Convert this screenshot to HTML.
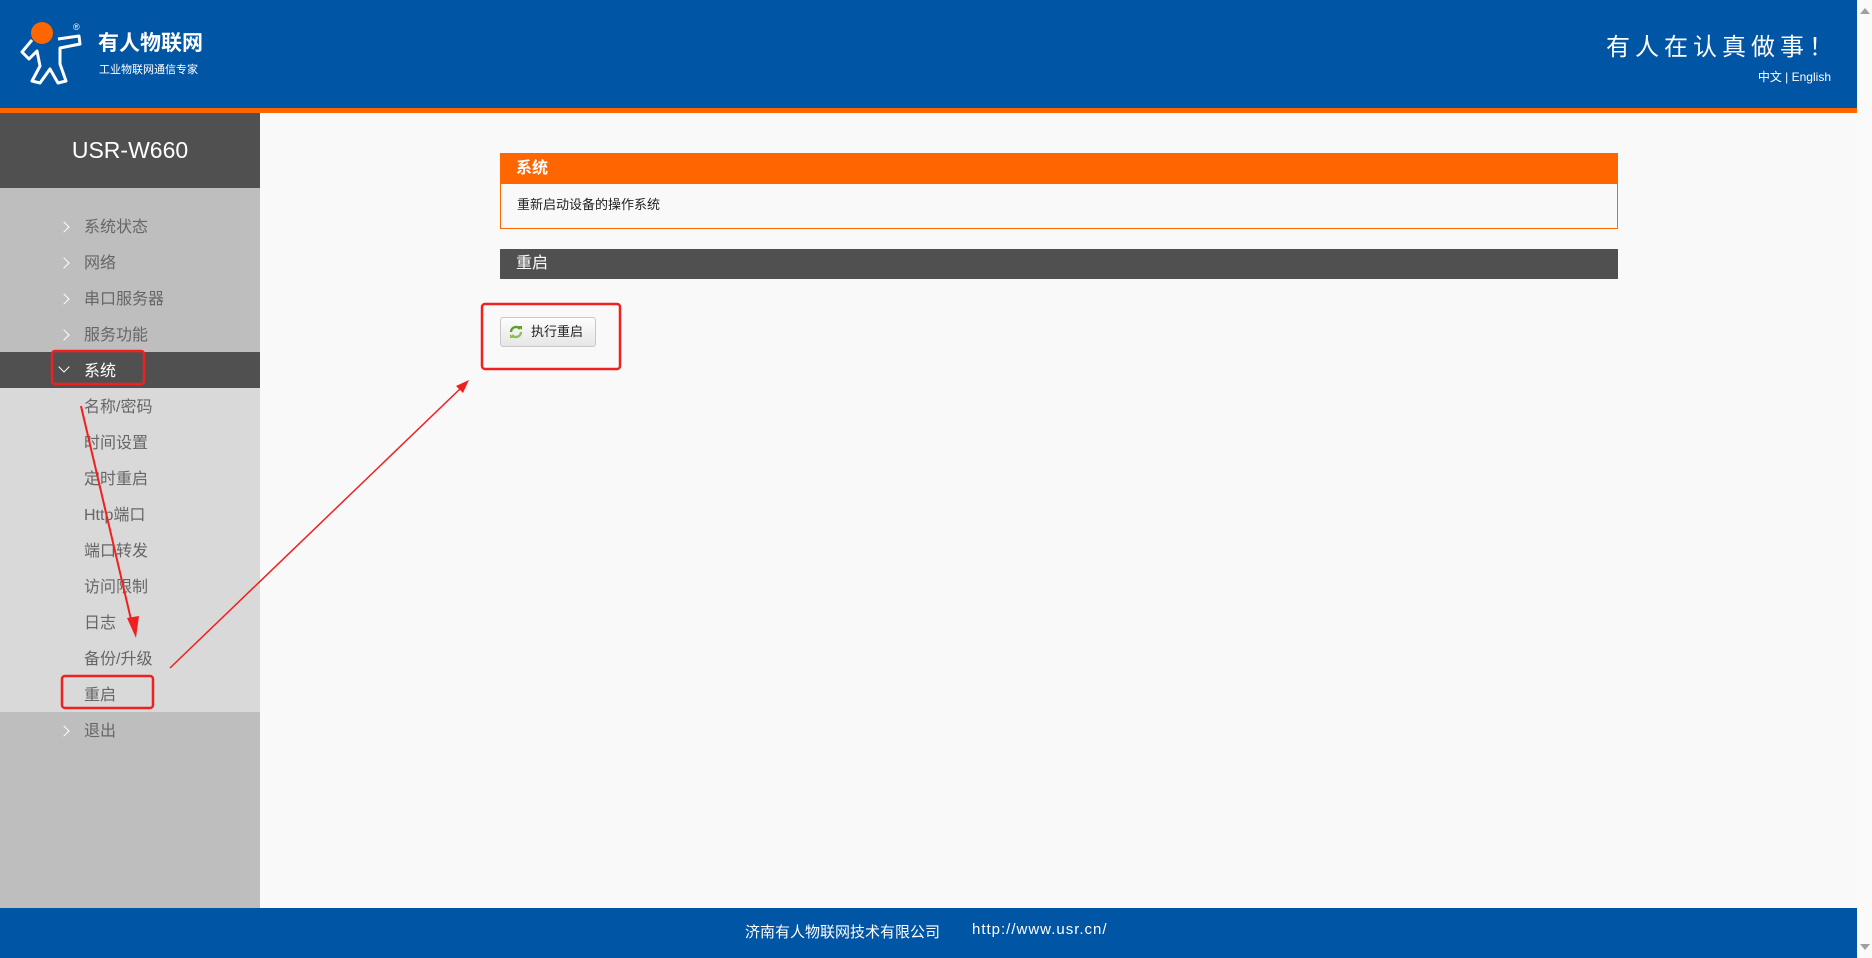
<!DOCTYPE html>
<html><head><meta charset="utf-8"><style>
*{margin:0;padding:0;box-sizing:border-box}
body{width:1872px;height:958px;overflow:hidden;background:#f9f9f9;font-family:"Liberation Sans","Noto Sans CJK SC",sans-serif;position:relative}
.hdr{position:absolute;left:0;top:0;width:1857px;height:108px;background:#0055a5}
.obar{position:absolute;left:0;top:108px;width:1857px;height:5px;background:#ff6600}
.side{position:absolute;left:0;top:113px;width:260px;height:795px;background:#bebebe}
.prod{position:absolute;left:0;top:0;width:260px;height:75px;background:#505050;color:#fff;font-size:23px;text-align:center;line-height:75px}
.it{position:absolute;left:0;width:260px;height:36px;line-height:40px;font-size:16px;color:#666}
.it span{position:absolute;left:84px}
.chev{position:absolute;left:60px;top:15px;width:8px;height:8px;border-right:1.6px solid #fff;border-top:1.6px solid #fff;transform:rotate(45deg)}
.foot{position:absolute;left:0;top:908px;width:1857px;height:50px;background:#0055a5;color:#fff;font-size:15px}
.sb{position:absolute;left:1857px;top:0;width:15px;height:958px;background:#fafafa}
</style></head><body>
<div class="hdr">
 <svg style="position:absolute;left:18px;top:18px" width="72" height="70" viewBox="0 0 72 70">
  <circle cx="24" cy="15" r="11" fill="#ff6600"/>
  <path d="M14 22 L4 34 L11 41 L19 33 L22 48 L14 63 L22 65 L32 51 L40 65 L48 63 L42 46 L42 30 L62 26 L61 18 L40 21" fill="none" stroke="#fff" stroke-width="3" stroke-linejoin="round"/>
  <text x="55" y="12" fill="#fff" font-size="9">®</text>
 </svg>
 <div style="position:absolute;left:98px;top:27px;color:#fff;font-size:21px;font-weight:bold">有人物联网</div>
 <div style="position:absolute;left:99px;top:61px;color:#fff;font-size:11px">工业物联网通信专家</div>
 <div style="position:absolute;right:19px;top:27px;color:#fff;font-size:24px;letter-spacing:5px">有人在认真做事！</div>
 <div style="position:absolute;right:26px;top:68px;color:#fff;font-size:12px">中文 | English</div>
</div>
<div class="obar"></div>
<div class="side">
 <div class="prod">USR-W660</div>
 <div class="it" style="top:95px"><i class="chev"></i><span>系统状态</span></div>
 <div class="it" style="top:131px"><i class="chev"></i><span>网络</span></div>
 <div class="it" style="top:167px"><i class="chev"></i><span>串口服务器</span></div>
 <div class="it" style="top:203px"><i class="chev"></i><span>服务功能</span></div>
 <div class="it" style="top:239px;background:#505050;color:#fff"><i class="chev" style="transform:rotate(135deg);top:11px"></i><span>系统</span></div>
 <div style="position:absolute;top:275px;left:0;width:260px;height:324px;background:#d9d9d9"></div>
 <div class="it" style="top:275px"><span>名称/密码</span></div>
 <div class="it" style="top:311px"><span>时间设置</span></div>
 <div class="it" style="top:347px"><span>定时重启</span></div>
 <div class="it" style="top:383px"><span>Http端口</span></div>
 <div class="it" style="top:419px"><span>端口转发</span></div>
 <div class="it" style="top:455px"><span>访问限制</span></div>
 <div class="it" style="top:491px"><span>日志</span></div>
 <div class="it" style="top:527px"><span>备份/升级</span></div>
 <div class="it" style="top:563px"><span>重启</span></div>
 <div class="it" style="top:599px"><i class="chev"></i><span>退出</span></div>
</div>
<div style="position:absolute;left:500px;top:153px;width:1118px;height:31px;background:#ff6600;color:#fff;font-size:16px;font-weight:bold;line-height:31px;padding-left:16px">系统</div>
<div style="position:absolute;left:500px;top:184px;width:1118px;height:45px;border:1px solid #ff6600;border-top:none;font-size:13px;line-height:42px;padding-left:16px;color:#222">重新启动设备的操作系统</div>
<div style="position:absolute;left:500px;top:249px;width:1118px;height:30px;background:#505050;color:#fff;font-size:16px;line-height:30px;padding-left:16px">重启</div>
<div style="position:absolute;left:500px;top:317px;width:96px;height:30px;border:1px solid #c8c8c8;border-radius:3px;background:linear-gradient(#fdfdfd,#e6e6e6);font-size:13px;line-height:28px;padding-left:30px;color:#222">执行重启
 <svg style="position:absolute;left:8px;top:7px" width="14" height="14" viewBox="0 0 14 14"><path d="M2 7a5 5 0 0 1 9-3" fill="none" stroke="#5a9e2c" stroke-width="2.4"/><path d="M12 7a5 5 0 0 1-9 3" fill="none" stroke="#8cc152" stroke-width="2.4"/><path d="M9 1l4 0 0 4z" fill="#5a9e2c"/><path d="M5 13l-4 0 0-4z" fill="#8cc152"/></svg>
</div>
<svg style="position:absolute;left:0;top:0" width="1872" height="958">
 <g fill="none" stroke="#f02020" stroke-width="2.5">
  <rect x="482" y="304" width="138" height="65" rx="3"/>
  <rect x="52" y="351" width="92" height="33" rx="3"/>
  <rect x="62" y="676" width="91" height="32" rx="3"/>
 </g>
 <line x1="81" y1="406" x2="133" y2="628" stroke="#f02020" stroke-width="2"/>
 <polygon points="127,618 139,616 136,638" fill="#f02020"/>
 <line x1="170" y1="668" x2="462" y2="387" stroke="#f02020" stroke-width="1.5"/>
 <polygon points="469,380 456,386 463,393" fill="#f02020"/>
</svg>
<div class="foot">
 <div style="position:absolute;left:745px;top:13px">济南有人物联网技术有限公司</div>
 <div style="position:absolute;left:972px;top:13px;letter-spacing:1px">http://www.usr.cn/</div>
</div>
<div class="sb"><div style="margin:8px 3px;width:0;height:0;border-left:5px solid transparent;border-right:5px solid transparent;border-bottom:6px solid #a0a0a0"></div>
<div style="position:absolute;bottom:8px;left:3px;width:0;height:0;border-left:5px solid transparent;border-right:5px solid transparent;border-top:6px solid #a0a0a0"></div></div>
</body></html>
